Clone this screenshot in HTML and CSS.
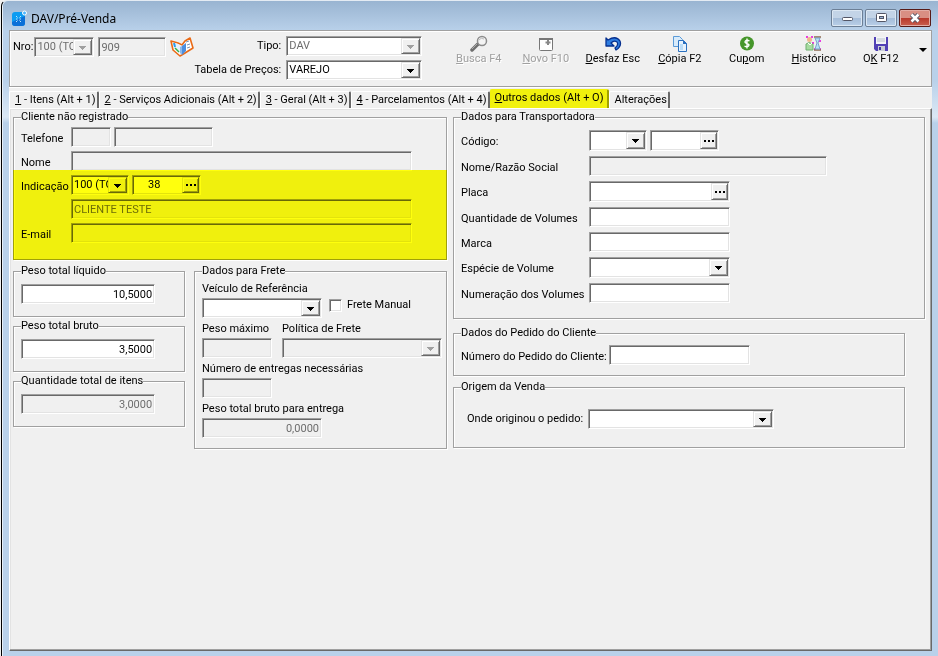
FILE: index.html
```html
<!DOCTYPE html>
<html lang="pt-BR">

<head>
  <meta charset="UTF-8">
  <meta name="viewport" content="width=device-width, initial-scale=1">
  <title>DAV/Pré-Venda</title>
  <link rel="stylesheet" href="styles.css">
</head>

<body>
  <div class="window">

    <header class="titlebar">
      <svg class="app-icon" width="17" height="17" viewBox="0 0 17 17">
        <rect x="1" y="2" width="13" height="14" rx="3" fill="#0c9cf2" />
        <path d="M1 12l13-6v7a3 3 0 0 1-3 3H4a3 3 0 0 1-3-3z" fill="#0a6fd8" />
        <path d="M5 6l1.500 1.500M10 6L8.500 7.500M5 12l1.500-1.500M10 12l-1.500-1.500M5 9h1.500M8.500 9H10" stroke="#bfe8ff" />
        <circle cx="13.500" cy="3" r="2" fill="#4db6ff" stroke="#fff" />
      </svg>
      <h1>DAV/Pré-Venda</h1>
      <div class="window-buttons">
        <button aria-label="Minimizar"><svg width="14" height="12" viewBox="0 0 14 12"><rect x="2.500" y="5.500" width="10" height="3" rx="1" fill="#fff" stroke="#535666" /></svg></button>
        <button aria-label="Maximizar"><svg width="14" height="12" viewBox="0 0 14 12"><rect x="2.500" y="1.500" width="10" height="8" rx="1" fill="#fff" stroke="#535666" /><rect x="5.500" y="4.500" width="4" height="2" fill="#9db8d8" stroke="#535666" /></svg></button>
        <button class="close" aria-label="Fechar"><svg width="14" height="12" viewBox="0 0 14 12"><path d="M3.500 2.500l7 7M10.500 2.500l-7 7" stroke="#535666" stroke-width="4.500" /><path d="M3.500 2.500l7 7M10.500 2.500l-7 7" stroke="#fff" stroke-width="2.500" /></svg></button>
      </div>
    </header>

    <section class="toolbar">
      <div class="number">
        <label for="nro">Nro:</label>
        <span class="combo disabled w-nro"><select id="nro" disabled><option>100 (TOTAL)</option></select></span>
        <input class="field w-num" aria-label="Número" value="909" disabled>
        <svg class="book" width="24" height="20" viewBox="0 0 24 20">
          <path d="M1 4l7 2 4 2 3-4 5-3 3 10-8 5-5 3-7-6z" fill="#fff" stroke="#ea6a16" stroke-width="1.600" stroke-linejoin="round" />
          <path d="M3 6l2 7 6 4 1-8-4-2z" fill="#e8f1fb" />
          <path d="M4 6l1 4" stroke="#2a9df0" stroke-width="2" />
          <path d="M5 11l4 4" stroke="#35b04a" stroke-width="1.500" />
          <path d="M12 9l4-3v8l-4 4z" fill="#4d8fe0" />
          <path d="M12 9l-2 1v6l2 2z" fill="#8fb9ea" />
          <path d="M16 5l3-1M17 8l3-1M17 11l3-1" stroke="#7c93b4" />
        </svg>
      </div>
      <div class="kind">
        <label for="tipo">Tipo:</label>
        <span class="combo w-kind off"><select id="tipo" disabled><option>DAV</option></select></span>
        <label for="tabela">Tabela de Preços:</label>
        <span class="combo w-kind"><select id="tabela"><option>VAREJO</option></select></span>
      </div>
      <div class="actions">
        <button disabled>
          <svg width="18" height="17" viewBox="0 0 18 17"><path d="M8 9l-6 6" stroke="#6e6e6e" stroke-width="3.500" stroke-linecap="round" /><path d="M7 9l-5 5" stroke="#aaa" /><circle cx="12" cy="6" r="4.500" fill="#f4f4f4" stroke="#8c8c8c" stroke-width="1.500" /><path d="M9 5q2-3 5-1" stroke="#bbb" fill="none" /></svg>
          <span><u>B</u>usca F4</span>
        </button>
        <button disabled>
          <svg width="16" height="17" viewBox="0 0 16 17"><rect x="1.500" y="3.500" width="13" height="12" rx="1" fill="#fff" stroke="#777" /><path d="M1 4h14" stroke="#777" stroke-width="2" /><path d="M10 5v5M7.500 7.500h5" stroke="#888" stroke-width="2" /></svg>
          <span><u>N</u>ovo F10</span>
        </button>
        <button>
          <svg width="18" height="17" viewBox="0 0 18 17"><path d="M2 3v8h8L7 8q3-3 6-1 2 3-2 6l1 2q6-4 4-9-4-6-12-1z" fill="#2f7de0" stroke="#06308f" stroke-width="1.300" stroke-linejoin="round" /></svg>
          <span><u>D</u>esfaz Esc</span>
        </button>
        <button>
          <svg width="16" height="17" viewBox="0 0 16 17"><path d="M1.500 1.500h6l3 3v7h-9z" fill="#d8ebfb" stroke="#5b9bd8" /><path d="M6.500 5.500h5l3 3v8h-8z" fill="#e8f3fd" stroke="#2a70c0" /><path d="M11 5v4h4z" fill="#2a70c0" /><path d="M8 9h3v6H8z" fill="#b9dcf8" /></svg>
          <span><u>C</u>ópia F2</span>
        </button>
        <button>
          <svg width="16" height="17" viewBox="0 0 16 17"><circle cx="8" cy="8.500" r="7" fill="#46962b" /><path d="M10.500 6Q8 4.500 6.500 6T8 8.500t1.500 2.500-4 0M8 3.500v10" fill="none" stroke="#fff" stroke-width="1.400" /></svg>
          <span>Cu<u>p</u>om</span>
        </button>
        <button>
          <svg width="17" height="17" viewBox="0 0 17 17"><path d="M1 1h2v2H1zM6 1h2v2H6zM7 7h2v2H7zM14 5h2v2h-2zM9 13h2v2H9zM15 13h1v2h-1z" fill="#e83be0" /><circle cx="4.500" cy="4.500" r="2.500" fill="#f0b78d" /><path d="M1 15V9q3-3 7 0v6z" fill="#a6dba0" stroke="#6fb070" /><path d="M3 8l2 2 2-2" stroke="#fff" fill="none" /><path d="M9 2h7M9 15h7" stroke="#8d6a50" stroke-width="1.500" /><path d="M10 3h5l-2 5 2 6h-5l2-6z" fill="#b5e2f6" stroke="#7aa3cc" /></svg>
          <span><u>H</u>istórico</span>
        </button>
        <button>
          <svg width="16" height="17" viewBox="0 0 16 17"><path d="M1 2h14v14H3l-2-2z" fill="#5141b5" /><path d="M3 2h10v7H3z" fill="#f3f5f8" /><path d="M4 4h8M4 6h8" stroke="#b9c0ca" /><path d="M5 11h7v5H5z" fill="#c9cdd6" /><path d="M6 12h2v3H6z" fill="#4135a0" /></svg>
          <span>O<u>K</u> F12</span>
        </button>
        <button class="more" aria-label="Mais opções"></button>
      </div>
    </section>

    <nav class="tabs" role="tablist">
      <button role="tab"><u>1</u> - Itens (Alt + 1)</button>
      <button role="tab"><u>2</u> - Serviços Adicionais (Alt + 2)</button>
      <button role="tab"><u>3</u> - Geral (Alt + 3)</button>
      <button role="tab"><u>4</u> - Parcelamentos (Alt + 4)</button>
      <button role="tab" class="active" aria-selected="true"><u>O</u>utros dados (Alt + O)</button>
      <button role="tab">Alterações</button>
    </nav>

    <main class="page">
      <div class="left">
        <fieldset class="client">
          <legend>Cliente não registrado</legend>
          <div class="form">
            <label for="ddd">Telefone</label>
            <div class="line">
              <input class="field w-ddd" id="ddd" disabled>
              <input class="field w-phone" aria-label="Número do telefone" disabled>
            </div>
            <label for="nome">Nome</label>
            <input class="field" id="nome" disabled>
            <label for="indicacao">Indicação</label>
            <div class="line">
              <span class="combo w-code"><select id="indicacao"><option>100 (TOTAL)</option></select></span>
              <span class="lookup w-lookup"><input aria-label="Código da indicação" value="38"><button aria-label="Procurar indicação"></button></span>
            </div>
            <input class="field second" aria-label="Cliente da indicação" value="CLIENTE TESTE" disabled>
            <label for="email">E-mail</label>
            <input class="field" id="email" disabled>
          </div>
          <div class="marker"></div>
        </fieldset>

        <div class="weights">
          <fieldset>
            <legend><label for="liquido">Peso total líquido</label></legend>
            <input class="field number-field" id="liquido" value="10,5000">
          </fieldset>
          <fieldset>
            <legend><label for="bruto">Peso total bruto</label></legend>
            <input class="field number-field" id="bruto" value="3,5000">
          </fieldset>
          <fieldset>
            <legend><label for="itens">Quantidade total de itens</label></legend>
            <input class="field number-field" id="itens" value="3,0000" disabled>
          </fieldset>
        </div>

        <fieldset class="freight">
          <legend>Dados para Frete</legend>
          <div class="stack">
            <label for="veiculo">Veículo de Referência</label>
            <div class="line wide">
              <span class="combo w-vehicle"><select id="veiculo"><option></option></select></span>
              <label class="check"><input type="checkbox"> Frete Manual</label>
            </div>
            <div class="pair">
              <label for="maximo">Peso máximo</label>
              <label for="politica">Política de Frete</label>
              <input class="field" id="maximo" disabled>
              <span class="combo disabled"><select id="politica" disabled><option></option></select></span>
            </div>
            <label for="entregas">Número de entregas necessárias</label>
            <input class="field w-small" id="entregas" disabled>
            <label for="entrega">Peso total bruto para entrega</label>
            <input class="field number-field w-vehicle" id="entrega" value="0,0000" disabled>
          </div>
        </fieldset>
      </div>

      <div class="right">
        <fieldset class="carrier">
          <legend>Dados para Transportadora</legend>
          <div class="form">
            <label for="codigo">Código:</label>
            <div class="line">
              <span class="combo w-code"><select id="codigo"><option></option></select></span>
              <span class="lookup w-lookup"><input aria-label="Código da transportadora"><button aria-label="Procurar transportadora"></button></span>
            </div>
            <label for="razao">Nome/Razão Social</label>
            <input class="field w-name" id="razao" disabled>
            <label for="placa">Placa</label>
            <span class="lookup w-std"><input id="placa"><button aria-label="Procurar placa"></button></span>
            <label for="qtd">Quantidade de Volumes</label>
            <input class="field w-std" id="qtd">
            <label for="marca">Marca</label>
            <input class="field w-std" id="marca">
            <label for="especie">Espécie de Volume</label>
            <span class="combo w-std"><select id="especie"><option></option></select></span>
            <label for="numeracao">Numeração dos Volumes</label>
            <input class="field w-std" id="numeracao">
          </div>
        </fieldset>

        <fieldset class="order">
          <legend>Dados do Pedido do Cliente</legend>
          <div class="line">
            <label for="pedido">Número do Pedido do Cliente:</label>
            <input class="field w-std" id="pedido">
          </div>
        </fieldset>

        <fieldset class="origin">
          <legend>Origem da Venda</legend>
          <div class="line">
            <label for="origem">Onde originou o pedido:</label>
            <span class="combo w-origin"><select id="origem"><option></option></select></span>
          </div>
        </fieldset>
      </div>
    </main>

  </div>
</body>

</html>
```

FILE: styles.css
```css
* {
  box-sizing: border-box;
}

body {
  margin: 0;
  background: #f0f0f0;
  color: #000;
  font: 11px/14px Roboto, "Liberation Sans", Arial, sans-serif;
}

button,
input,
select {
  font: inherit;
  color: inherit;
  margin: 0;
}

/* Window frame */
.window {
  display: flex;
  flex-direction: column;
  min-height: 100vh;
  margin-left: 1px;
  padding: 0 6px 5px 7px;
  border-left: 1px solid #000;
  border-top: 1px solid #e4ebf3;
  border-top-left-radius: 6px;
  background: linear-gradient(#99b4d1, #b9d1ea 30px, #b9d1ea 80px, #dbe8f5 116px, #b9d1ea 122px);
  box-shadow: inset 1px 0 #e8f0f8;
}

.titlebar {
  display: flex;
  align-items: center;
  height: 29px;
  padding: 5px 1px 0 2px;
}

.titlebar h1 {
  flex: 1;
  margin: 2px 0 0 3px;
  font: 12px/16px "Noto Sans", "Open Sans", sans-serif;
}

.window-buttons {
  display: flex;
  gap: 2px;
}

.window-buttons button {
  display: grid;
  place-items: center;
  width: 32px;
  height: 18px;
  padding: 0;
  border: 1px solid #6c7f96;
  border-radius: 2px;
  background: linear-gradient(#c3d4e7 50%, #a4bcd8 50%, #b9cfe8);
  box-shadow: inset 0 0 0 1px #dbe7f3;
}

.window-buttons .close {
  border-color: #571b17;
  background: linear-gradient(#d98f83 50%, #b8382a 50%, #c9604f);
  box-shadow: inset 0 0 0 1px #e3ada5;
}

/* Toolbar */
.toolbar {
  display: flex;
  height: 57px;
  border: 1px solid #a0a0a0;
  background: #f0f0f0;
  box-shadow: inset 1px 1px #fff;
}

.number {
  display: flex;
  align-items: center;
  gap: 4px;
  height: 20px;
  margin: 6px 0 0 3px;
}

.number label {
  margin-right: -3px;
}

.kind {
  display: grid;
  grid-template-columns: auto auto;
  align-content: start;
  align-items: center;
  gap: 4px 5px;
  margin: 0 23px 0 auto;
  padding-top: 5px;
  text-align: right;
  white-space: nowrap;
}

.actions {
  display: flex;
  align-items: flex-start;
}

.actions button {
  display: flex;
  flex-direction: column;
  align-items: center;
  width: 67px;
  padding: 4px 0 0;
  border: 0;
  background: none;
}

.actions button:disabled {
  color: #a0a0a0;
  text-shadow: 1px 1px #fff;
}

.actions .more {
  width: 17px;
  padding: 17px 0 0;
}

.more::before {
  content: "";
  border: 4px solid transparent;
  border-top-color: #000;
  border-bottom: 0;
}

/* Tabs */
.tabs {
  display: flex;
  align-items: flex-end;
  height: 21px;
  background: #f0f0f0;
  box-shadow: inset 0 1px #fff;
}

.tabs button {
  height: 17px;
  padding: 0 1px 0 5px;
  border: solid;
  border-width: 1px 2px 0 1px;
  border-color: #fff #696969 #fff #fff;
  border-radius: 2px 2px 0 0;
  background: #f0f0f0;
  white-space: nowrap;
}

.tabs .active {
  height: 19px;
  padding: 0 3px 3px 4px;
  border-color: #f1f10d #a0a000 #f1f10d #f1f10d;
  background: #f1f10d;
}

/* Page */
.page {
  flex: 1;
  display: grid;
  grid-template-columns: 434fr 472fr;
  align-items: start;
  gap: 6px;
  padding: 1px 6px 8px 3px;
  border: 1px solid;
  border-color: #fff #696969 #696969 #fff;
  background: #f0f0f0;
  box-shadow: inset -1px -1px #a0a0a0, inset 1px 1px #e3e3e3;
}

fieldset {
  position: relative;
  min-width: 0;
  margin: 0;
  padding: 6px 7px 12px;
  border: 1px solid #a0a0a0;
  box-shadow: inset 1px 1px #fff, 1px 1px #fff;
}

legend {
  padding: 0;
  background: #f0f0f0;
}

.left {
  display: grid;
  grid-template-columns: 172fr 253fr;
  gap: 4px 9px;
  align-items: start;
}

.weights {
  display: grid;
  gap: 2px;
}

.weights .field {
  display: block;
  width: 86%;
}

.form {
  display: grid;
  align-items: center;
}

.line {
  display: flex;
  align-items: center;
  gap: 3px;
}

.form > label,
.order label {
  padding-top: 3px;
}

.client {
  grid-column: 1 / -1;
  padding: 3px 34px 16px 7px;
}

.client .form {
  grid-template-columns: 50px 1fr;
  row-gap: 4px;
}

.client .second {
  grid-column: 2;
}

/* Highlighter stroke over the lower part of the group */
.marker {
  position: absolute;
  inset: 46px -1px -1px;
  background: #ffff0d;
  mix-blend-mode: multiply;
  pointer-events: none;
}

.freight {
  padding: 4px 4px 10px 7px;
}

.stack {
  display: grid;
  justify-items: start;
}

.stack label {
  margin-bottom: 2px;
}

.stack > .line,
.stack > .field,
.pair {
  margin-bottom: 4px;
}

.stack > .field:last-child {
  margin-bottom: 0;
}

.stack .wide {
  gap: 7px;
}

.pair {
  display: grid;
  grid-template-columns: 70px 1fr;
  column-gap: 10px;
  width: 100%;
}

.stack .check {
  display: flex;
  align-items: center;
  gap: 5px;
  margin-bottom: 6px;
}

.check input {
  appearance: none;
  width: 13px;
  height: 13px;
  border: 1px solid;
  border-color: #a0a0a0 #fff #fff #a0a0a0;
  background: #fff;
  box-shadow: inset 1px 1px #696969, inset -1px -1px #e3e3e3;
}

.check input:checked {
  background: #696969;
}

.carrier {
  padding: 6px 7px 15px;
}

.carrier .form {
  grid-template-columns: 128px 1fr;
  row-gap: 5px;
}

.carrier .combo,
.carrier .lookup {
  height: 21px;
}

.order {
  margin: 7px 20px 0 0;
  padding: 5px 7px 10px;
}

.order .line {
  gap: 2px;
}

.origin .line {
  gap: 5px;
}

.origin {
  margin: 4px 20px 0 0;
  padding: 15px 7px 18px;
}

.origin .line {
  padding-left: 6px;
}

/* Sunken fields */
.field,
.combo,
.lookup {
  height: 20px;
  border: 1px solid;
  border-color: #a0a0a0 #fff #fff #a0a0a0;
  border-radius: 0;
  background: #fff;
  box-shadow: inset 1px 1px #696969, inset -1px -1px #e3e3e3;
}

.field {
  min-width: 0;
  padding: 0 2px;
}

.field:disabled,
.combo.disabled {
  background: #f0f0f0;
  color: #6d6d6d;
}

.number-field {
  text-align: right;
}

.combo,
.lookup {
  position: relative;
  display: flex;
  padding: 1px;
}

.combo select,
.lookup input {
  appearance: none;
  flex: 1;
  min-width: 0;
  padding: 0 12px 0 1px;
  border: 0;
  border-radius: 0;
  background: none;
}

.combo select:disabled {
  color: #6d6d6d;
  opacity: 1;
}

.lookup input {
  padding: 0 2px 0 14px;
}

.combo::after,
.lookup button {
  width: 17px;
  border: 1px solid;
  border-color: #e3e3e3 #696969 #696969 #e3e3e3;
  background: #f0f0f0;
  box-shadow: inset 1px 1px #fff, inset -1px -1px #a0a0a0;
}

/* Drop-down arrow, laid over the native select */
.combo::after {
  content: "";
  position: absolute;
  inset: 1px 1px 1px auto;
  background: conic-gradient(from -45deg at 50% 100%, #000 90deg, transparent 0) center 6px / 8px 4px no-repeat #f0f0f0;
  background: linear-gradient(#000, #000) center 6px / 7px 1px no-repeat,
    linear-gradient(#000, #000) center 7px / 5px 1px no-repeat,
    linear-gradient(#000, #000) center 8px / 3px 1px no-repeat,
    linear-gradient(#000, #000) center 9px / 1px 1px no-repeat #f0f0f0;
  pointer-events: none;
}

.combo.disabled::after,
.combo.off::after {
  background: linear-gradient(#a0a0a0, #a0a0a0) center 6px / 7px 1px no-repeat,
    linear-gradient(#a0a0a0, #a0a0a0) center 7px / 5px 1px no-repeat,
    linear-gradient(#a0a0a0, #a0a0a0) center 8px / 3px 1px no-repeat,
    linear-gradient(#a0a0a0, #a0a0a0) center 9px / 1px 1px no-repeat #f0f0f0;
}

.lookup button {
  display: grid;
  place-items: center;
  padding: 0;
}

.lookup button::before {
  content: "";
  width: 10px;
  height: 2px;
  background: repeating-linear-gradient(90deg, #000 0 2px, transparent 2px 4px);
}

/* Field widths */
.w-nro {
  width: 60px;
}

.w-num {
  width: 68px;
}

.w-kind {
  width: 136px;
}

.w-ddd {
  width: 40px;
}

.w-phone {
  width: 99px;
}

.w-code {
  width: 58px;
}

.w-lookup {
  width: 69px;
}

.w-name {
  width: 238px;
}

.w-std {
  width: 141px;
}

.w-vehicle {
  width: 120px;
}

.w-small {
  width: 70px;
}

.w-origin {
  width: 186px;
}
```
